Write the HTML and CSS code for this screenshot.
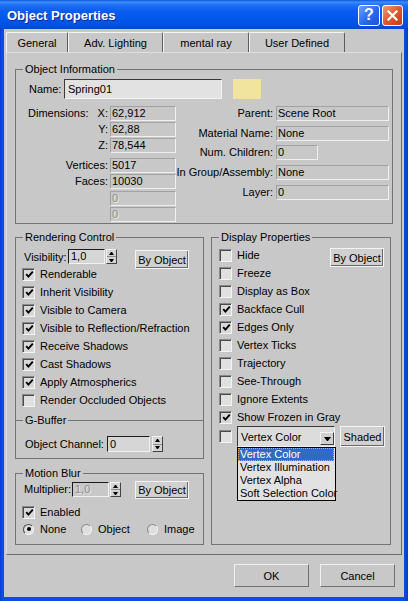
FILE: index.html
```html
<!DOCTYPE html>
<html lang="en">
<head>
    <meta charset="UTF-8">
    <title>Object Properties</title>
    <link rel="stylesheet" href="styles.css">
</head>
<body>
<div class="window">
    <div class="titlebar">
        <span class="title">Object Properties</span>
        <div class="caption">
            <span class="cap-btn help">?</span>
            <span class="cap-btn close">
                <svg width="11" height="11" viewBox="0 0 11 11"><path d="M1.5 1.5 L9.5 9.5 M9.5 1.5 L1.5 9.5" stroke="#fff" stroke-width="2.2" stroke-linecap="square"/></svg>
            </span>
        </div>
    </div>

    <div class="client">
        <div class="tabs">
            <div class="tab active w-gen">General</div>
            <div class="tab w-adv">Adv. Lighting</div>
            <div class="tab w-mr">mental ray</div>
            <div class="tab w-ud">User Defined</div>
        </div>

        <div class="panel">
            <fieldset class="group info">
                <legend>Object Information</legend>
                <div class="name-row">
                    <span class="name-label">Name:</span>
                    <div class="name-field">Spring01</div>
                    <div class="swatch"></div>
                </div>
                <div class="info-body">
                    <div class="dims">
                        <div class="dim-row"><span class="dim-label"><span>Dimensions:</span><span>X:</span></span><span class="ro">62,912</span></div>
                        <div class="dim-row"><span class="dim-label end">Y:</span><span class="ro">62,88</span></div>
                        <div class="dim-row"><span class="dim-label end">Z:</span><span class="ro">78,544</span></div>
                        <div class="dim-row sep"><span class="dim-label end">Vertices:</span><span class="ro">5017</span></div>
                        <div class="dim-row"><span class="dim-label end">Faces:</span><span class="ro">10030</span></div>
                        <div class="dim-row blank"><span class="dim-label"></span><span class="ro off">0</span></div>
                        <div class="dim-row"><span class="dim-label"></span><span class="ro off">0</span></div>
                    </div>
                    <div class="props">
                        <span class="prop-label">Parent:</span><span class="ro">Scene Root</span>
                        <span class="prop-label">Material Name:</span><span class="ro">None</span>
                        <span class="prop-label">Num. Children:</span><span class="ro short">0</span>
                        <span class="prop-label">In Group/Assembly:</span><span class="ro">None</span>
                        <span class="prop-label">Layer:</span><span class="ro">0</span>
                    </div>
                </div>
            </fieldset>

            <div class="columns">
                <div class="col-left">
                    <fieldset class="group render">
                        <legend>Rendering Control</legend>
                        <div class="vis-row">
                            <span class="vis-label">Visibility:</span>
                            <span class="spin-field">1,0</span>
                            <span class="spinner"><span class="up"></span><span class="down"></span></span>
                            <button class="btn-sm">By Object</button>
                        </div>
                        <div class="checks">
                            <div class="check-row"><span class="cb on"><svg width="9" height="9" viewBox="0 0 9 9"><path d="M1.2 4.2 L3.4 6.6 L7.8 1.6" fill="none" stroke="#000" stroke-width="1.9"/></svg></span>Renderable</div>
                            <div class="check-row"><span class="cb on"><svg width="9" height="9" viewBox="0 0 9 9"><path d="M1.2 4.2 L3.4 6.6 L7.8 1.6" fill="none" stroke="#000" stroke-width="1.9"/></svg></span>Inherit Visibility</div>
                            <div class="check-row"><span class="cb on"><svg width="9" height="9" viewBox="0 0 9 9"><path d="M1.2 4.2 L3.4 6.6 L7.8 1.6" fill="none" stroke="#000" stroke-width="1.9"/></svg></span>Visible to Camera</div>
                            <div class="check-row"><span class="cb on"><svg width="9" height="9" viewBox="0 0 9 9"><path d="M1.2 4.2 L3.4 6.6 L7.8 1.6" fill="none" stroke="#000" stroke-width="1.9"/></svg></span>Visible to Reflection/Refraction</div>
                            <div class="check-row"><span class="cb on"><svg width="9" height="9" viewBox="0 0 9 9"><path d="M1.2 4.2 L3.4 6.6 L7.8 1.6" fill="none" stroke="#000" stroke-width="1.9"/></svg></span>Receive Shadows</div>
                            <div class="check-row"><span class="cb on"><svg width="9" height="9" viewBox="0 0 9 9"><path d="M1.2 4.2 L3.4 6.6 L7.8 1.6" fill="none" stroke="#000" stroke-width="1.9"/></svg></span>Cast Shadows</div>
                            <div class="check-row"><span class="cb on"><svg width="9" height="9" viewBox="0 0 9 9"><path d="M1.2 4.2 L3.4 6.6 L7.8 1.6" fill="none" stroke="#000" stroke-width="1.9"/></svg></span>Apply Atmospherics</div>
                            <div class="check-row"><span class="cb"></span>Render Occluded Objects</div>
                        </div>
                    </fieldset>

                    <fieldset class="group gbuffer">
                        <legend>G-Buffer</legend>
                        <div class="gb-row">
                            <span class="gb-label">Object Channel:</span>
                            <span class="spin-field wide">0</span>
                            <span class="spinner tall"><span class="up"></span><span class="down"></span></span>
                        </div>
                    </fieldset>

                    <fieldset class="group motion">
                        <legend>Motion Blur</legend>
                        <div class="mb-row">
                            <span class="mb-label">Multiplier:</span>
                            <span class="spin-field disabled">1,0</span>
                            <span class="spinner"><span class="up"></span><span class="down"></span></span>
                            <button class="btn-sm mb-btn">By Object</button>
                        </div>
                        <div class="check-row enabled"><span class="cb on"><svg width="9" height="9" viewBox="0 0 9 9"><path d="M1.2 4.2 L3.4 6.6 L7.8 1.6" fill="none" stroke="#000" stroke-width="1.9"/></svg></span>Enabled</div>
                        <div class="radio-row">
                            <span class="radio-item r-none"><span class="rb on"></span>None</span>
                            <span class="radio-item r-obj"><span class="rb"></span>Object</span>
                            <span class="radio-item"><span class="rb"></span>Image</span>
                        </div>
                    </fieldset>
                </div>

                <fieldset class="group display">
                    <legend>Display Properties</legend>
                    <div class="disp-rows">
                        <div class="check-row"><span class="cb"></span>Hide<button class="btn-sm disp-btn">By Object</button></div>
                        <div class="check-row"><span class="cb"></span>Freeze</div>
                        <div class="check-row"><span class="cb"></span>Display as Box</div>
                        <div class="check-row"><span class="cb on"><svg width="9" height="9" viewBox="0 0 9 9"><path d="M1.2 4.2 L3.4 6.6 L7.8 1.6" fill="none" stroke="#000" stroke-width="1.9"/></svg></span>Backface Cull</div>
                        <div class="check-row"><span class="cb on"><svg width="9" height="9" viewBox="0 0 9 9"><path d="M1.2 4.2 L3.4 6.6 L7.8 1.6" fill="none" stroke="#000" stroke-width="1.9"/></svg></span>Edges Only</div>
                        <div class="check-row"><span class="cb"></span>Vertex Ticks</div>
                        <div class="check-row"><span class="cb"></span>Trajectory</div>
                        <div class="check-row"><span class="cb"></span>See-Through</div>
                        <div class="check-row"><span class="cb"></span>Ignore Extents</div>
                        <div class="check-row"><span class="cb on"><svg width="9" height="9" viewBox="0 0 9 9"><path d="M1.2 4.2 L3.4 6.6 L7.8 1.6" fill="none" stroke="#000" stroke-width="1.9"/></svg></span>Show Frozen in Gray</div>
                        <div class="vc-row">
                            <span class="cb"></span>
                            <div class="combo">
                                <span>Vertex Color</span>
                                <span class="combo-arrow"></span>
                                <ul class="combo-list">
                                    <li class="selected">Vertex Color</li>
                                    <li>Vertex Illumination</li>
                                    <li>Vertex Alpha</li>
                                    <li>Soft Selection Color</li>
                                </ul>
                            </div>
                            <button class="btn-sm shaded">Shaded</button>
                        </div>
                    </div>
                </fieldset>
            </div>
        </div>

        <div class="footer">
            <button class="btn">OK</button>
            <button class="btn">Cancel</button>
        </div>
    </div>
</div>
</body>
</html>
```

FILE: styles.css
```css
* {
    box-sizing: border-box;
}

body {
    margin: 0;
    font-family: "Liberation Sans", Arial, sans-serif;
    font-size: 11px;
    color: #000;
    background: #fff;
}

button {
    font-family: inherit;
    font-size: 11px;
    color: #000;
    padding: 0;
}

.window {
    width: 408px;
    height: 601px;
    display: flex;
    flex-direction: column;
    background: linear-gradient(to right, #0a3cc8, #0a4ee4 2px, #0a4ee4 404px, #0a3cc8);
}

/* title bar */
.titlebar {
    height: 29px;
    flex: none;
    display: flex;
    align-items: center;
    justify-content: space-between;
    padding: 1px 5px 0 7px;
    background: linear-gradient(to bottom, #0a56dc 0, #3d8cf8 2px, #1e70f4 5px, #0a5cf0 11px, #0256ea 20px, #0050de 26px, #0048d0 29px);
}

.title {
    color: #fff;
    font-weight: bold;
    font-size: 13px;
    text-shadow: 1px 1px 0 #0c2a9a;
}

.caption {
    display: flex;
    gap: 2px;
}

.cap-btn {
    width: 22px;
    height: 21px;
    border: 1px solid #fff;
    border-radius: 3px;
    display: flex;
    align-items: center;
    justify-content: center;
}

.help {
    background: linear-gradient(135deg, #6aa0ff, #2a68f0 55%, #1c50d4);
    color: #fff;
    font-weight: bold;
    font-size: 16px;
}

.close {
    width: 21px;
    background: linear-gradient(135deg, #f49a76, #e2582e 50%, #c63c16);
}

/* client area */
.client {
    flex: 1;
    margin: 0 4px 4px;
    background: #c8c8c8;
    display: flex;
    flex-direction: column;
}

.tabs {
    display: flex;
    height: 23px;
    flex: none;
    padding: 3px 0 0 2px;
}

.tab {
    height: 20px;
    border: 1px solid;
    border-color: #f4f4f4 #5c5c5c transparent #f4f4f4;
    border-bottom: none;
    border-radius: 2px 2px 0 0;
    display: flex;
    align-items: center;
    justify-content: center;
}

.w-gen { width: 62px; }
.w-adv { width: 95px; }
.w-mr { width: 86px; }
.w-ud { width: 96px; }

.panel {
    flex: 1;
    margin: 0 2px;
    border: 1px solid;
    border-color: #dedede #6c6c6c #6c6c6c #dedede;
    padding: 10px 8px 0;
}

/* group boxes */
.group {
    margin: 0;
    padding: 0;
    min-width: 0;
    border: 1px solid #747474;
}

.group legend {
    padding: 0 2px;
    margin-left: 7px;
    line-height: 13px;
}

/* object information */
.name-row {
    display: flex;
    align-items: center;
    height: 20px;
    margin: 3px 0 0 13px;
}

.name-label {
    width: 35px;
}

.name-field {
    width: 158px;
    height: 20px;
    border: 1px solid;
    border-color: #3a3a3a #f4f4f4 #f4f4f4 #3a3a3a;
    background: #e2e2e2;
    padding-left: 3px;
    line-height: 18px;
}

.swatch {
    width: 28px;
    height: 20px;
    margin-left: 11px;
    background: #f0e49e;
}

.info-body {
    display: flex;
    margin-top: 7px;
}

.dims {
    width: 160px;
    padding-left: 12px;
    display: flex;
    flex-direction: column;
}

.dim-row {
    display: flex;
    height: 15px;
    margin-bottom: 1px;
}

.dim-row.sep {
    margin-top: 4px;
}

.dim-row.blank {
    margin-top: 1px;
}

.dim-label {
    width: 82px;
    padding-right: 2px;
    display: flex;
    justify-content: space-between;
    line-height: 15px;
}

.dim-label.end {
    justify-content: flex-end;
}

.ro {
    width: 66px;
    height: 15px;
    border: 1px solid;
    border-color: #a2a2a2 #efefef #efefef #a2a2a2;
    padding-left: 1px;
    line-height: 13px;
    white-space: nowrap;
}

.ro.off {
    color: #8c8c8c;
    text-shadow: 1px 1px 0 #eaeaea;
}

.props {
    flex: 1;
    display: grid;
    grid-template-columns: 1fr 113px;
    grid-auto-rows: 15px;
    column-gap: 3px;
    row-gap: 4.7px;
    padding-right: 3px;
    align-content: start;
}

.prop-label {
    text-align: right;
    line-height: 15px;
    white-space: nowrap;
}

.props .ro {
    width: auto;
}

.props .ro.short {
    width: 42px;
}

/* columns */
.columns {
    display: flex;
    gap: 7px;
    margin-top: 7px;
}

.col-left {
    width: 189px;
    display: flex;
    flex-direction: column;
}

.render {
    border-bottom: none;
    padding-bottom: 11px;
}

.vis-row {
    display: flex;
    align-items: flex-start;
    height: 16px;
    margin: 5px 0 0 8px;
}

.vis-label {
    width: 44px;
    line-height: 17px;
}

.spin-field {
    width: 37px;
    height: 15px;
    border: 1px solid;
    border-color: #1c1c1c #f2f2f2 #f2f2f2 #1c1c1c;
    background: #d6d6d6;
    padding-left: 2px;
    line-height: 13px;
}

.spin-field.wide {
    width: 43px;
    height: 16px;
    line-height: 14px;
}

.spin-field.disabled {
    background: #c8c8c8;
    color: #8c8c8c;
    text-shadow: 1px 1px 0 #eaeaea;
}

.spinner {
    width: 11px;
    height: 15px;
    margin-left: 1px;
    display: flex;
    flex-direction: column;
    border: 1px solid;
    border-color: #f2f2f2 #444 #444 #f2f2f2;
    background: #d4d4d4;
}

.spinner.tall {
    height: 16px;
    margin-left: 2px;
}

.spinner span {
    flex: 1;
    display: flex;
    align-items: center;
    justify-content: center;
}

.spinner span + span {
    border-top: 1px solid #8a8a8a;
}

.spinner .up::after,
.spinner .down::after {
    content: "";
    width: 1px;
    border-left: 2px solid transparent;
    border-right: 2px solid transparent;
}

.spinner .up::after {
    border-bottom: 3px solid #000;
}

.spinner .down::after {
    border-top: 3px solid #000;
}

.btn-sm {
    width: 54px;
    height: 19px;
    margin: 1px 0 0 18px;
    border: 1px solid #f4f4f4;
    box-shadow: inset -1px -1px 0 #6a6a6a;
    background: #d0d0d0;
}

/* checkboxes and radios */
.checks {
    margin-left: 6px;
}

.check-row {
    display: flex;
    align-items: center;
    height: 18px;
    white-space: nowrap;
}

.cb {
    width: 13px;
    height: 13px;
    flex: none;
    margin-right: 5px;
    border: 1px solid;
    border-color: #8a8a8a #f4f4f4 #f4f4f4 #8a8a8a;
    box-shadow: inset 1px 1px 0 #4a4a4a;
    background: #e0e0e0;
    display: flex;
    align-items: center;
    justify-content: center;
    padding: 1px 0 0 1px;
}

.cb.on {
    background: #d8d8d8;
}

.gbuffer {
    margin-top: -6px;
}

.gb-row {
    display: flex;
    height: 16px;
    margin: 9px 0 6px 9px;
}

.gb-label {
    width: 82px;
    line-height: 17px;
}

.motion {
    margin-top: 8px;
}

.mb-row {
    display: flex;
    align-items: flex-start;
    height: 15px;
    margin: 2px 0 0 8px;
}

.mb-label {
    width: 48px;
    line-height: 15px;
}

.mb-btn {
    height: 18px;
    margin: -1px 0 0 14px;
}

.check-row.enabled {
    margin: 6px 0 0 6px;
}

.radio-row {
    display: flex;
    align-items: center;
    height: 18px;
    margin: -1px 0 6px 7px;
}

.radio-item {
    display: flex;
    align-items: center;
}

.r-none { width: 58px; }
.r-obj { width: 66px; }

.rb {
    width: 11px;
    height: 11px;
    margin-right: 6px;
    border-radius: 50%;
    border: 1px solid;
    border-color: #8a8a8a #f4f4f4 #f4f4f4 #8a8a8a;
    background: #dedede;
    display: flex;
    align-items: center;
    justify-content: center;
}

.rb.on {
    border-color: #4a4a4a #f4f4f4 #f4f4f4 #4a4a4a;
}

.rb.on::after {
    content: "";
    width: 4px;
    height: 4px;
    border-radius: 50%;
    background: #000;
}

/* display properties */
.display {
    width: 180px;
}

.disp-rows {
    margin: 2px 0 0 7px;
}

.disp-btn {
    align-self: flex-start;
    margin: 2px 6px 0 auto;
}

.vc-row {
    display: flex;
    align-items: center;
    height: 21px;
}

.combo {
    position: relative;
    width: 98px;
    height: 21px;
    border: 1px solid;
    border-color: #3a3a3a #f2f2f2 #f2f2f2 #3a3a3a;
    background: #dcdcdc;
    display: flex;
    align-items: center;
    padding-left: 3px;
}

.combo-arrow {
    width: 14px;
    height: 13px;
    margin-left: auto;
    margin-top: 4px;
    border: 1px solid;
    border-color: #f4f4f4 #404040 #404040 #f4f4f4;
    background: #d0d0d0;
    display: flex;
    align-items: center;
    justify-content: center;
}

.combo-arrow::after {
    content: "";
    width: 1px;
    border-left: 3px solid transparent;
    border-right: 3px solid transparent;
    border-top: 4px solid #000;
}

.combo-list {
    position: absolute;
    top: 20px;
    left: -1px;
    width: 99px;
    margin: 0;
    padding: 0;
    list-style: none;
    border: 1px solid #000;
    background: #e2e2e2;
    z-index: 2;
}

.combo-list li {
    height: 13px;
    line-height: 13px;
    padding-left: 2px;
    white-space: nowrap;
}

.combo-list li.selected {
    background: #316ac5;
    color: #fff;
    outline: 1px dotted #e8a848;
    outline-offset: -1px;
    margin-right: 1px;
}

.shaded {
    width: 45px;
    height: 21px;
    margin: 0 0 0 5px;
}

/* footer */
.footer {
    flex: none;
    display: flex;
    justify-content: flex-end;
    gap: 11px;
    padding: 9px 9px 10px 0;
}

.btn {
    width: 75px;
    height: 23px;
    border: 1px solid;
    border-color: #f0f0f0 #707070 #707070 #f0f0f0;
    background: #c8c8c8;
}
```
